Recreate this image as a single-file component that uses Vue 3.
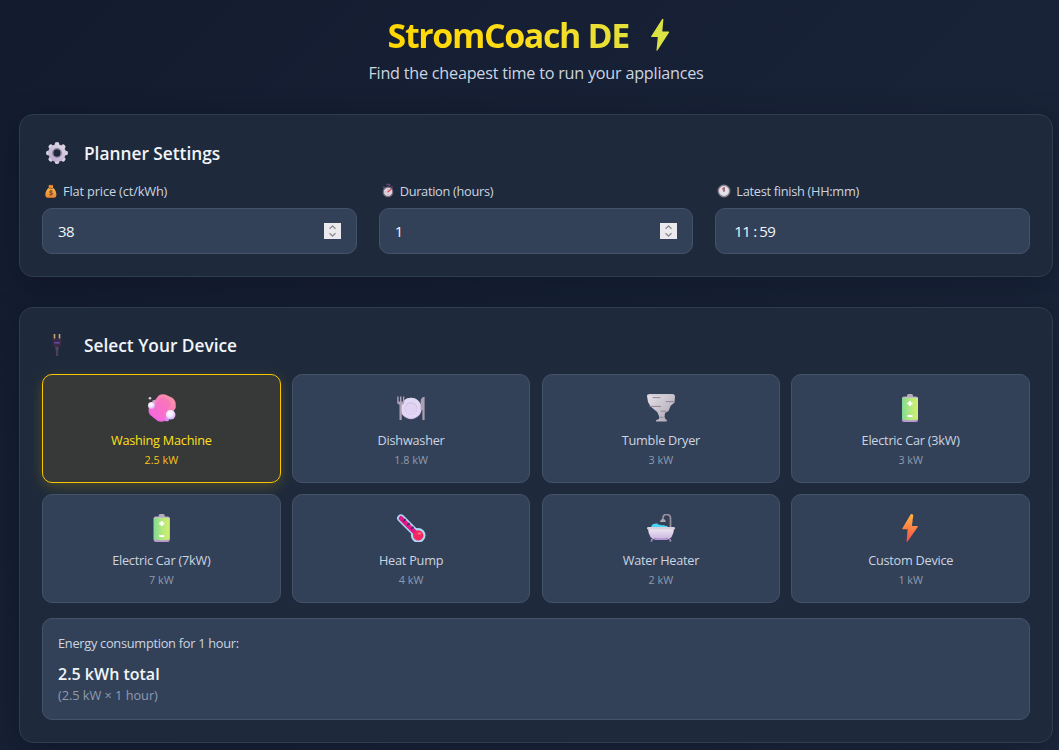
<script setup>
import { ref } from 'vue'

const devices = [
  { name: 'Washing Machine', power: '2.5 kW', icon: 'soap' },
  { name: 'Dishwasher', power: '1.8 kW', icon: 'plate' },
  { name: 'Tumble Dryer', power: '3 kW', icon: 'tornado' },
  { name: 'Electric Car (3kW)', power: '3 kW', icon: 'battery', shift: -1 },
  { name: 'Electric Car (7kW)', power: '7 kW', icon: 'battery', shift: 0.7 },
  { name: 'Heat Pump', power: '4 kW', icon: 'thermo' },
  { name: 'Water Heater', power: '2 kW', icon: 'bath' },
  { name: 'Custom Device', power: '1 kW', icon: 'bolt' }
]
const selected = ref(0)
const teeth = [0, 45, 90, 135, 180, 225, 270, 315]
</script>

<template>
  <div class="page">
    <svg class="defs" width="0" height="0">
      <defs>
        <linearGradient id="gSoap" x1="1" y1="0" x2="0.2" y2="1"><stop offset="0" stop-color="#fb9a9c" /><stop offset="1" stop-color="#f65ee6" /></linearGradient>
        <linearGradient id="gSoapIn" x1="1" y1="0" x2="0" y2="1"><stop offset="0" stop-color="#f77bb0" /><stop offset="1" stop-color="#f966dc" /></linearGradient>
        <radialGradient id="gBubble" cx="0.4" cy="0.35" r="0.7"><stop offset="0" stop-color="#fff" /><stop offset="0.5" stop-color="#f3e4fd" /><stop offset="1" stop-color="#cf9cf0" /></radialGradient>
        <linearGradient id="gGear" gradientUnits="userSpaceOnUse" x1="22" y1="5" x2="8" y2="25"><stop offset="0" stop-color="#e2dce6" /><stop offset="1" stop-color="#b9a5cf" /></linearGradient>
        <linearGradient id="gTornado" x1="0" y1="0" x2="1" y2="1"><stop offset="0" stop-color="#e6e1e9" /><stop offset="1" stop-color="#aba3b0" /></linearGradient>
        <linearGradient id="gBattery" x1="0" y1="0" x2="1" y2="0"><stop offset="0" stop-color="#82d996" /><stop offset="0.55" stop-color="#b5ea7b" /><stop offset="1" stop-color="#d4ee70" /></linearGradient>
        <linearGradient id="gBolt" x1="0" y1="0" x2="0" y2="1"><stop offset="0" stop-color="#ffb247" /><stop offset="0.5" stop-color="#ff8243" /><stop offset="1" stop-color="#f24a50" /></linearGradient>
        <linearGradient id="gTub" x1="0" y1="0" x2="0" y2="1"><stop offset="0" stop-color="#efeaf2" /><stop offset="1" stop-color="#c8b2df" /></linearGradient>
        <linearGradient id="gBag" x1="0" y1="0" x2="0" y2="1"><stop offset="0" stop-color="#ffc547" /><stop offset="1" stop-color="#eb812f" /></linearGradient>
      </defs>
    </svg>

    <header class="header">
      <h1 class="title">
        <span class="title-text">StromCoach DE</span>
        <svg class="title-bolt" width="20" height="34" viewBox="0 0 20 34"><path d="M12.2 1 1.2 18.2Q.7 19 1.7 19H7.8L6.5 32.2Q6.6 33.4 7.6 32.3L19 14.5Q19.4 13.6 18.4 13.6H12.3L13.4 1.6Q13.2.1 12.2 1Z" fill="#dbe344" /></svg>
      </h1>
      <p class="subtitle">Find the cheapest time to run your appliances</p>
    </header>

    <section class="card">
      <h2 class="heading first">
        <svg width="30" height="30" viewBox="0 0 30 30">
          <path v-for="a in teeth" :key="a" d="M12.700 9V6Q12.700 4 15 4T17.300 6V9Z" fill="url(#gGear)" :transform="`rotate(${a} 15 15)`" />
          <circle cx="15" cy="15" r="6.300" fill="none" stroke="url(#gGear)" stroke-width="4.800" />
          <circle cx="15" cy="15" r="4.300" fill="none" stroke="#92869f" stroke-width="1.300" />
        </svg>
        <span>Planner Settings</span>
      </h2>
      <div class="fields">
        <div class="field">
          <div class="label wide">
            <svg width="18" height="16" viewBox="0 0 18 16">
              <path d="M6.8 3h4.2v2c3.2 1.3 4.8 8.8 2 9.4-1.600.4-6.600.4-8.200 0C2 13.800 3.600 6.300 6.800 5Z" fill="url(#gBag)" />
              <path d="M6.500 2.500 8 1.800l1.200.5 1.800-.5-.7 3H7.500Z" fill="#ef8b2d" />
              <path d="M7 5.300h4" stroke="#9a573a" stroke-width="1" />
              <path d="M10.800 8.100c-3-1.200-4.300 1.100-1.800 1.600 2.600.6 1.500 3-1.700 1.700M9 6.800v6" fill="none" stroke="#875134" stroke-width="1.100" />
            </svg>
            <span>Flat price (ct/kWh)</span>
          </div>
          <div class="input">
            <span>38</span>
            <svg class="spin" width="17" height="16" viewBox="0 0 17 16"><path d="M0 0h17v16H0Z" fill="#ebe9ed" /><path d="m5.500 5.800 3-2.800 3 2.800M5.500 10.200l3 2.800 3-2.800" fill="none" stroke="#8e8c94" stroke-width="1.300" /></svg>
          </div>
        </div>
        <div class="field">
          <div class="label">
            <svg width="18" height="16" viewBox="0 0 18 16">
              <path d="M7.300 1.500h3.400v2M4.200 3.600l1.200 1.200M13.600 3.400l-1.200 1.300" fill="none" stroke="#654374" stroke-width="1.500" />
              <circle cx="9" cy="8.900" r="4.800" fill="#ded5df" stroke="#76677f" stroke-width="1.200" />
              <path d="m8.500 9.300 3.300-2.800" stroke="#e3455f" stroke-width="1.500" />
              <path d="M6 9h.7M9 12v-.7M9 5.800v.7" stroke="#8f8195" />
            </svg>
            <span>Duration (hours)</span>
          </div>
          <div class="input">
            <span>1</span>
            <svg class="spin" width="17" height="16" viewBox="0 0 17 16"><path d="M0 0h17v16H0Z" fill="#ebe9ed" /><path d="m5.500 5.800 3-2.800 3 2.800M5.500 10.200l3 2.800 3-2.800" fill="none" stroke="#8e8c94" stroke-width="1.300" /></svg>
          </div>
        </div>
        <div class="field">
          <div class="label">
            <svg width="18" height="16" viewBox="0 0 18 16">
              <circle cx="9" cy="8" r="5.700" fill="#e6e1e6" stroke="#89818c" stroke-width="1.400" />
              <path d="M9 8.500V4.300" stroke="#40364b" stroke-width="1.200" />
              <path d="M9 8.500 7.500 5" stroke="#e3546c" stroke-width="1.200" />
            </svg>
            <span>Latest finish (HH:mm)</span>
          </div>
          <div class="input time"><span>11</span><span class="colon">:</span><span>59</span></div>
        </div>
      </div>
    </section>

    <section class="card">
      <h2 class="heading">
        <svg width="30" height="30" viewBox="0 0 30 30">
          <path d="M12.500 3v5M17.500 3v5" stroke="#d5a073" stroke-width="1.600" />
          <path d="M10 7.500h10v1.200l-.8.600v3.700c0 1.800-1.800 3-2.500 3.400h-3.400c-.8-.4-2.500-1.600-2.500-3.400v-3.700l-.8-.6Z" fill="#392b45" />
          <path d="M12.300 11h5.400v1.400h-5.400Z" fill="#6f45b5" />
          <path d="M13.200 16h3.600l-.6 4h-2.400Z" fill="#54465d" />
          <path d="M14 19.500h2.200V25H14Z" fill="#4d4055" />
        </svg>
        <span>Select Your Device</span>
      </h2>
      <div class="devices">
        <div v-for="(d, i) in devices" :key="d.name" class="device" :class="{ active: i === selected }" @click="selected = i">
          <svg width="30" height="28" viewBox="0 0 30 28">
            <g v-if="d.icon === 'soap'" transform="translate(.7 0)">
              <path d="M12 1.500Q15-.3 18.500.5L25 3.500Q29 6 29 10V14L20.500 25.500Q16 29 11 27L3.500 21Q1 18.500 2.300 13.500Z" fill="url(#gSoap)" />
              <path d="M13.500 5q2.500-2 5-.7l4 3q1.800 1.500.8 4L17.500 20q-2.500 3.500-5.500 2l-4.500-3q-2-1.500-1-4.500Z" fill="url(#gSoapIn)" stroke="#f07bc1" stroke-width=".6" />
              <circle cx="20.200" cy="25" r="2.400" fill="#cf8df2" />
              <circle cx="24" cy="20.800" r="4.800" fill="url(#gBubble)" />
              <circle cx="4.800" cy="11.600" r="3.500" fill="url(#gBubble)" />
              <circle cx="7.200" cy="7.500" r="1.600" fill="#d9a8dc" />
              <circle cx="3.300" cy="4.200" r="1.300" fill="#ddccec" />
            </g>
            <g v-else-if="d.icon === 'plate'">
              <circle cx="15" cy="14.500" r="10.700" fill="#cdb9e6" />
              <circle cx="15" cy="14" r="10.200" fill="#e3d8f4" />
              <circle cx="15" cy="14.500" r="6.300" fill="#cbb7e4" />
              <circle cx="15" cy="15" r="5.900" fill="#dfd2f2" />
              <path d="M1.200 2.500v6q0 2 2.300 2.300V26h2.200V10.800Q8.300 10.500 8.300 8.500v-6H7v5H5.500v-5H4v5H2.600v-5Z" fill="#aba0b5" />
              <path d="M28.600 26h-2.200V16h-1.800V8q0-5 4-5.200Z" fill="#aaa0b3" />
            </g>
            <g v-else-if="d.icon === 'tornado'">
              <path d="M1 2Q1 0 4 0h22q3 0 3 2.500l-.5 6-4 3.500-2 5-3.500 2-.5 4 1 2 1.700 1.500q.2 1-2 1H11q-1.500 0-1-1.200l3-1.300V22l-1.800-4L4.500 12.500 2 8Z" fill="url(#gTornado)" />
              <path d="M7 3.600h7M20 7.600h8.500M4 12.400h10.500M15 17.200h5M13.500 23.300h3.500" stroke="#8d8595" stroke-width="1" stroke-linecap="round" />
              <path d="M2 1h26" stroke="#c2bcc8" stroke-width=".7" />
            </g>
            <g v-else-if="d.icon === 'battery'" :transform="`translate(${d.shift} 0)`">
              <path d="M12 1.500Q12 0 13.500 0h3Q18 0 18 1.500V4h-6Z" fill="#b5adba" />
              <path d="M7 4q0-1.500 2-1.500h12q2 0 2 1.500v22q0 2-2 2H9q-2 0-2-2Z" fill="#b89bcd" />
              <path d="M7 4h16v21.500q-8 1.400-16 0Z" fill="url(#gBattery)" />
              <path d="M7.500 3.800Q15 2.700 22.500 3.800" stroke="#c2c5b9" fill="none" />
              <path d="M15 7v5M12.500 9.500h5M12.500 22h5" stroke="#fff" stroke-width="1.900" />
            </g>
            <g v-else-if="d.icon === 'thermo'">
              <path d="m5 4.300 16.500 16.500" stroke="#afd9f7" stroke-width="7.600" stroke-linecap="round" />
              <circle cx="22.200" cy="21.400" r="7.300" fill="#afd9f7" />
              <path d="M5 4.300 21 20.300" stroke="#e11787" stroke-width="4.600" stroke-linecap="round" />
              <circle cx="22.200" cy="21.400" r="5.200" fill="#f62860" />
              <path d="m9.500 5-2.200 2.400M13.500 9l-2.300 2.400M17.500 12.800l-2.300 2.300" stroke="#343063" stroke-width="1.500" />
              <ellipse cx="23.500" cy="19.500" rx="2" ry="1.100" fill="#ff7389" />
            </g>
            <g v-else-if="d.icon === 'bath'">
              <path d="M24.500 14V4.500q0-4-4-4t-3.500 5" fill="none" stroke="#9a929d" stroke-width="1.700" />
              <path d="M14 8q.5-3 3-3t2.800 3Z" fill="#afa7b2" />
              <path d="M5 14q0-3.500 3.500-4.200Q12 9 13 11q2-.8 3 .6 2-1.200 3.200.3Q22 11 22 14Z" fill="#4bd4f5" />
              <path d="m6 25-.6 2.600M24 25l.6 2.600" stroke="#a28bb4" stroke-width="1.800" />
              <path d="M2 14h26q-.4 11-8 12H10Q2.400 25 2 14Z" fill="url(#gTub)" />
              <path d="M8 24.500q7 1.500 14 0" fill="none" stroke="#ad8dd0" stroke-width="1.400" />
              <rect x="1" y="13" width="28" height="2.500" rx="1.200" fill="#d8d0da" />
            </g>
            <path v-else transform="translate(-1 0)" d="M15.600.6 7.300 14.400Q7 15.300 8 15.300h4.700l-1.200 12q.3 1.200 1.100.2L22.700 13q.4-1-.6-1h-5.200L18.300 1.200Q16.800-.6 15.600.6Z" fill="url(#gBolt)" />
          </svg>
          <span class="name">{{ d.name }}</span>
          <span class="power">{{ d.power }}</span>
        </div>
      </div>
      <div class="energy">
        <div class="energy-label">Energy consumption for 1 hour:</div>
        <div class="energy-total">2.5 kWh total</div>
        <div class="energy-note">(2.5 kW × 1 hour)</div>
      </div>
    </section>
  </div>
</template>

<style>
body { background: #172033; overflow: hidden; }
</style>

<style scoped>
.page {
  box-sizing: border-box;
  height: 750px;
  overflow: hidden;
  padding: 10px 6px 0 19px;
  font-family: "Open Sans", "Noto Sans", sans-serif;
  color: #f1f5f9;
  background: linear-gradient(135deg, #131b2f 0%, #1c283c 100%);
}
.defs { position: absolute; }
svg { display: block; flex: none; }
.header { display: flex; flex-direction: column; align-items: center; margin-bottom: 29px; }
.title { display: flex; align-items: center; gap: 21.5px; height: 51px; margin: 0; padding-right: 14px; font-size: 34px; line-height: 48px; font-weight: 700; letter-spacing: -1.4px; }
.title-text { padding-bottom: 2px; color: transparent; background: linear-gradient(90deg, #ffd700, #ffdc17 50%, #e4e03c); background-clip: text; -webkit-background-clip: text; }
.title-bolt { margin-top: -1px; }
.subtitle { margin: 0; font-size: 16.2px; line-height: 24px; letter-spacing: -0.23px; color: #cbd5e1; }
.card {
  box-sizing: border-box;
  padding: 22px;
  margin-bottom: 30px;
  background: #1e293b;
  border: 1px solid #2f3d51;
  border-radius: 14px;
  box-shadow: 0 8px 30px rgba(7, 10, 28, 0.35);
}
.heading { display: flex; align-items: center; gap: 12px; height: 32px; margin: 0 0 12px; font-size: 17.3px; font-weight: 600; line-height: 32px; }
.first span { padding-top: 1px; }
.fields { display: grid; grid-template-columns: repeat(3, 1fr); gap: 22px; }
.label { display: flex; align-items: center; gap: 3px; height: 19px; margin-bottom: 8px; font-size: 12.8px; line-height: 19px; letter-spacing: -0.3px; color: #cbd5e1; }
.label.wide { letter-spacing: -0.15px; }
.label span { padding-top: 2px; }
.input {
  box-sizing: border-box;
  display: flex;
  align-items: center;
  justify-content: space-between;
  height: 46px;
  padding: 0 15px;
  font-size: 15px;
  letter-spacing: -0.6px;
  background: #334158;
  border: 1px solid #44526a;
  border-radius: 10px;
}
.time { justify-content: flex-start; padding-left: 18px; }
.colon { width: 9px; text-align: center; }
.devices { display: grid; grid-template-columns: repeat(4, 1fr); gap: 11px 11.2px; margin-bottom: 15px; }
.device {
  box-sizing: border-box;
  display: flex;
  flex-direction: column;
  align-items: center;
  height: 109px;
  padding-top: 19px;
  background: #334158;
  border: 1px solid #44526a;
  border-radius: 10px;
  color: #cbd5e1;
}
.device.active { background: #363937; border-color: #fdc500; color: #ffe01a; box-shadow: 0 4px 14px rgba(255, 215, 0, 0.2); }
.name { margin-top: 8px; font-size: 12.7px; line-height: 20px; letter-spacing: -0.23px; }
.power { font-size: 10.8px; line-height: 20px; color: #8d9bb0; }
.active .power { color: #fbc318; }
.energy { box-sizing: border-box; height: 102px; padding: 15px; background: #334158; border: 1px solid #44526a; border-radius: 10px; }
.energy-label { font-size: 12.8px; line-height: 18px; letter-spacing: -0.28px; margin-bottom: 10px; color: #cbd5e1; }
.energy-total { font-size: 16px; line-height: 24px; font-weight: 600; }
.energy-note { font-size: 12.8px; line-height: 18px; letter-spacing: -0.05px; color: #8d9bb0; }
</style>
